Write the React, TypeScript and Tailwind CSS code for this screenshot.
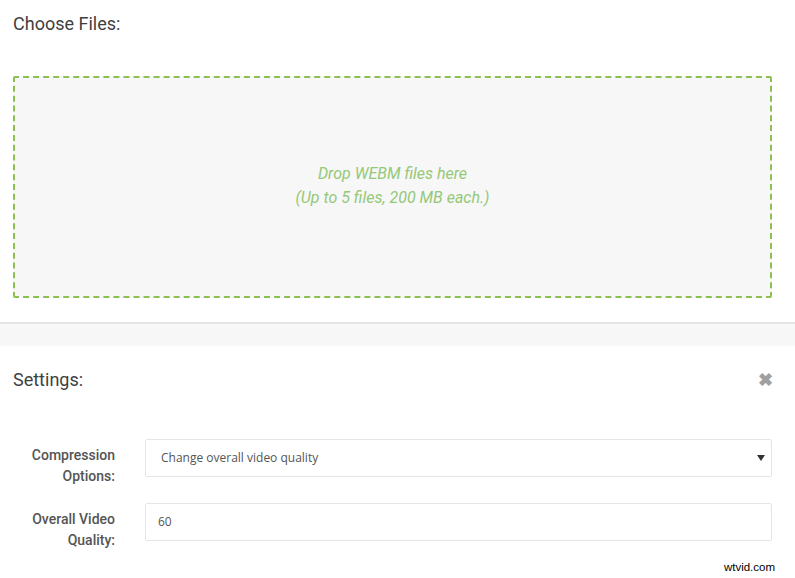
import React from "react";

export default function App() {
  return (
    <div className="relative w-[795px] h-[578px] overflow-hidden bg-white" style={{ fontFamily: "Roboto, 'Open Sans', sans-serif" }}>
      <div className="pl-[13px] pr-[23px]">
        <h2 className="pt-[12px] text-[18px] leading-[24px] font-normal text-[#3f3f3f]">Choose Files:</h2>
        <div className="mt-[40px] h-[222px] border-2 border-dashed border-[#8cc152] rounded-[2px] bg-[#f7f7f7] flex flex-col items-center justify-center text-[16px] leading-[24px] italic text-[#95c878] pb-[2px]">
          <div>Drop WEBM files here</div>
          <div>(Up to 5 files, 200 MB each.)</div>
        </div>
      </div>
      <div className="mt-[24px] border-t-2 border-[#e5e5e5] h-[24px] bg-[#f7f7f7]"></div>
      <div className="pl-[13px] pr-[23px]">
        <div className="mt-[22px] flex items-center justify-between">
          <h2 className="text-[18px] leading-[24px] font-normal text-[#3f3f3f]">Settings:</h2>
          <span className="text-[#a0a0a0] text-[18px] leading-[24px] font-bold mr-[-1px]">✖</span>
        </div>
        <div className="mt-[47px] flex flex-col gap-[16px]">
          <div className="flex items-start">
            <label className="w-[102px] text-right text-[14px] leading-[21px] font-medium text-[#555] pt-[6px]">Compression Options:</label>
            <div className="ml-[30px] flex-1 h-[38px] border border-[#e6e6e6] rounded-[2px] flex items-center justify-between pl-[15px] pr-[6px] text-[12px] text-[#555]" style={{ fontFamily: "'Open Sans', sans-serif" }}>
              <span>Change overall video quality</span>
              <svg width="8" height="6" viewBox="0 0 8 6"><path d="M0 0 L8 0 L4 6 Z" fill="#333" /></svg>
            </div>
          </div>
          <div className="flex items-start">
            <label className="w-[102px] text-right text-[14px] leading-[21px] font-medium text-[#555] pt-[6px]">Overall Video Quality:</label>
            <div className="ml-[30px] flex-1 h-[38px] border border-[#e6e6e6] rounded-[2px] flex items-center pl-[12px] text-[12px] text-[#555]" style={{ fontFamily: "'Open Sans', sans-serif" }}>
              60
            </div>
          </div>
        </div>
      </div>
      <div className="absolute right-[20px] bottom-[2px] text-[11.5px] text-black" style={{ fontFamily: "'Liberation Sans', Arial, sans-serif" }}>wtvid.com</div>
    </div>
  );
}
